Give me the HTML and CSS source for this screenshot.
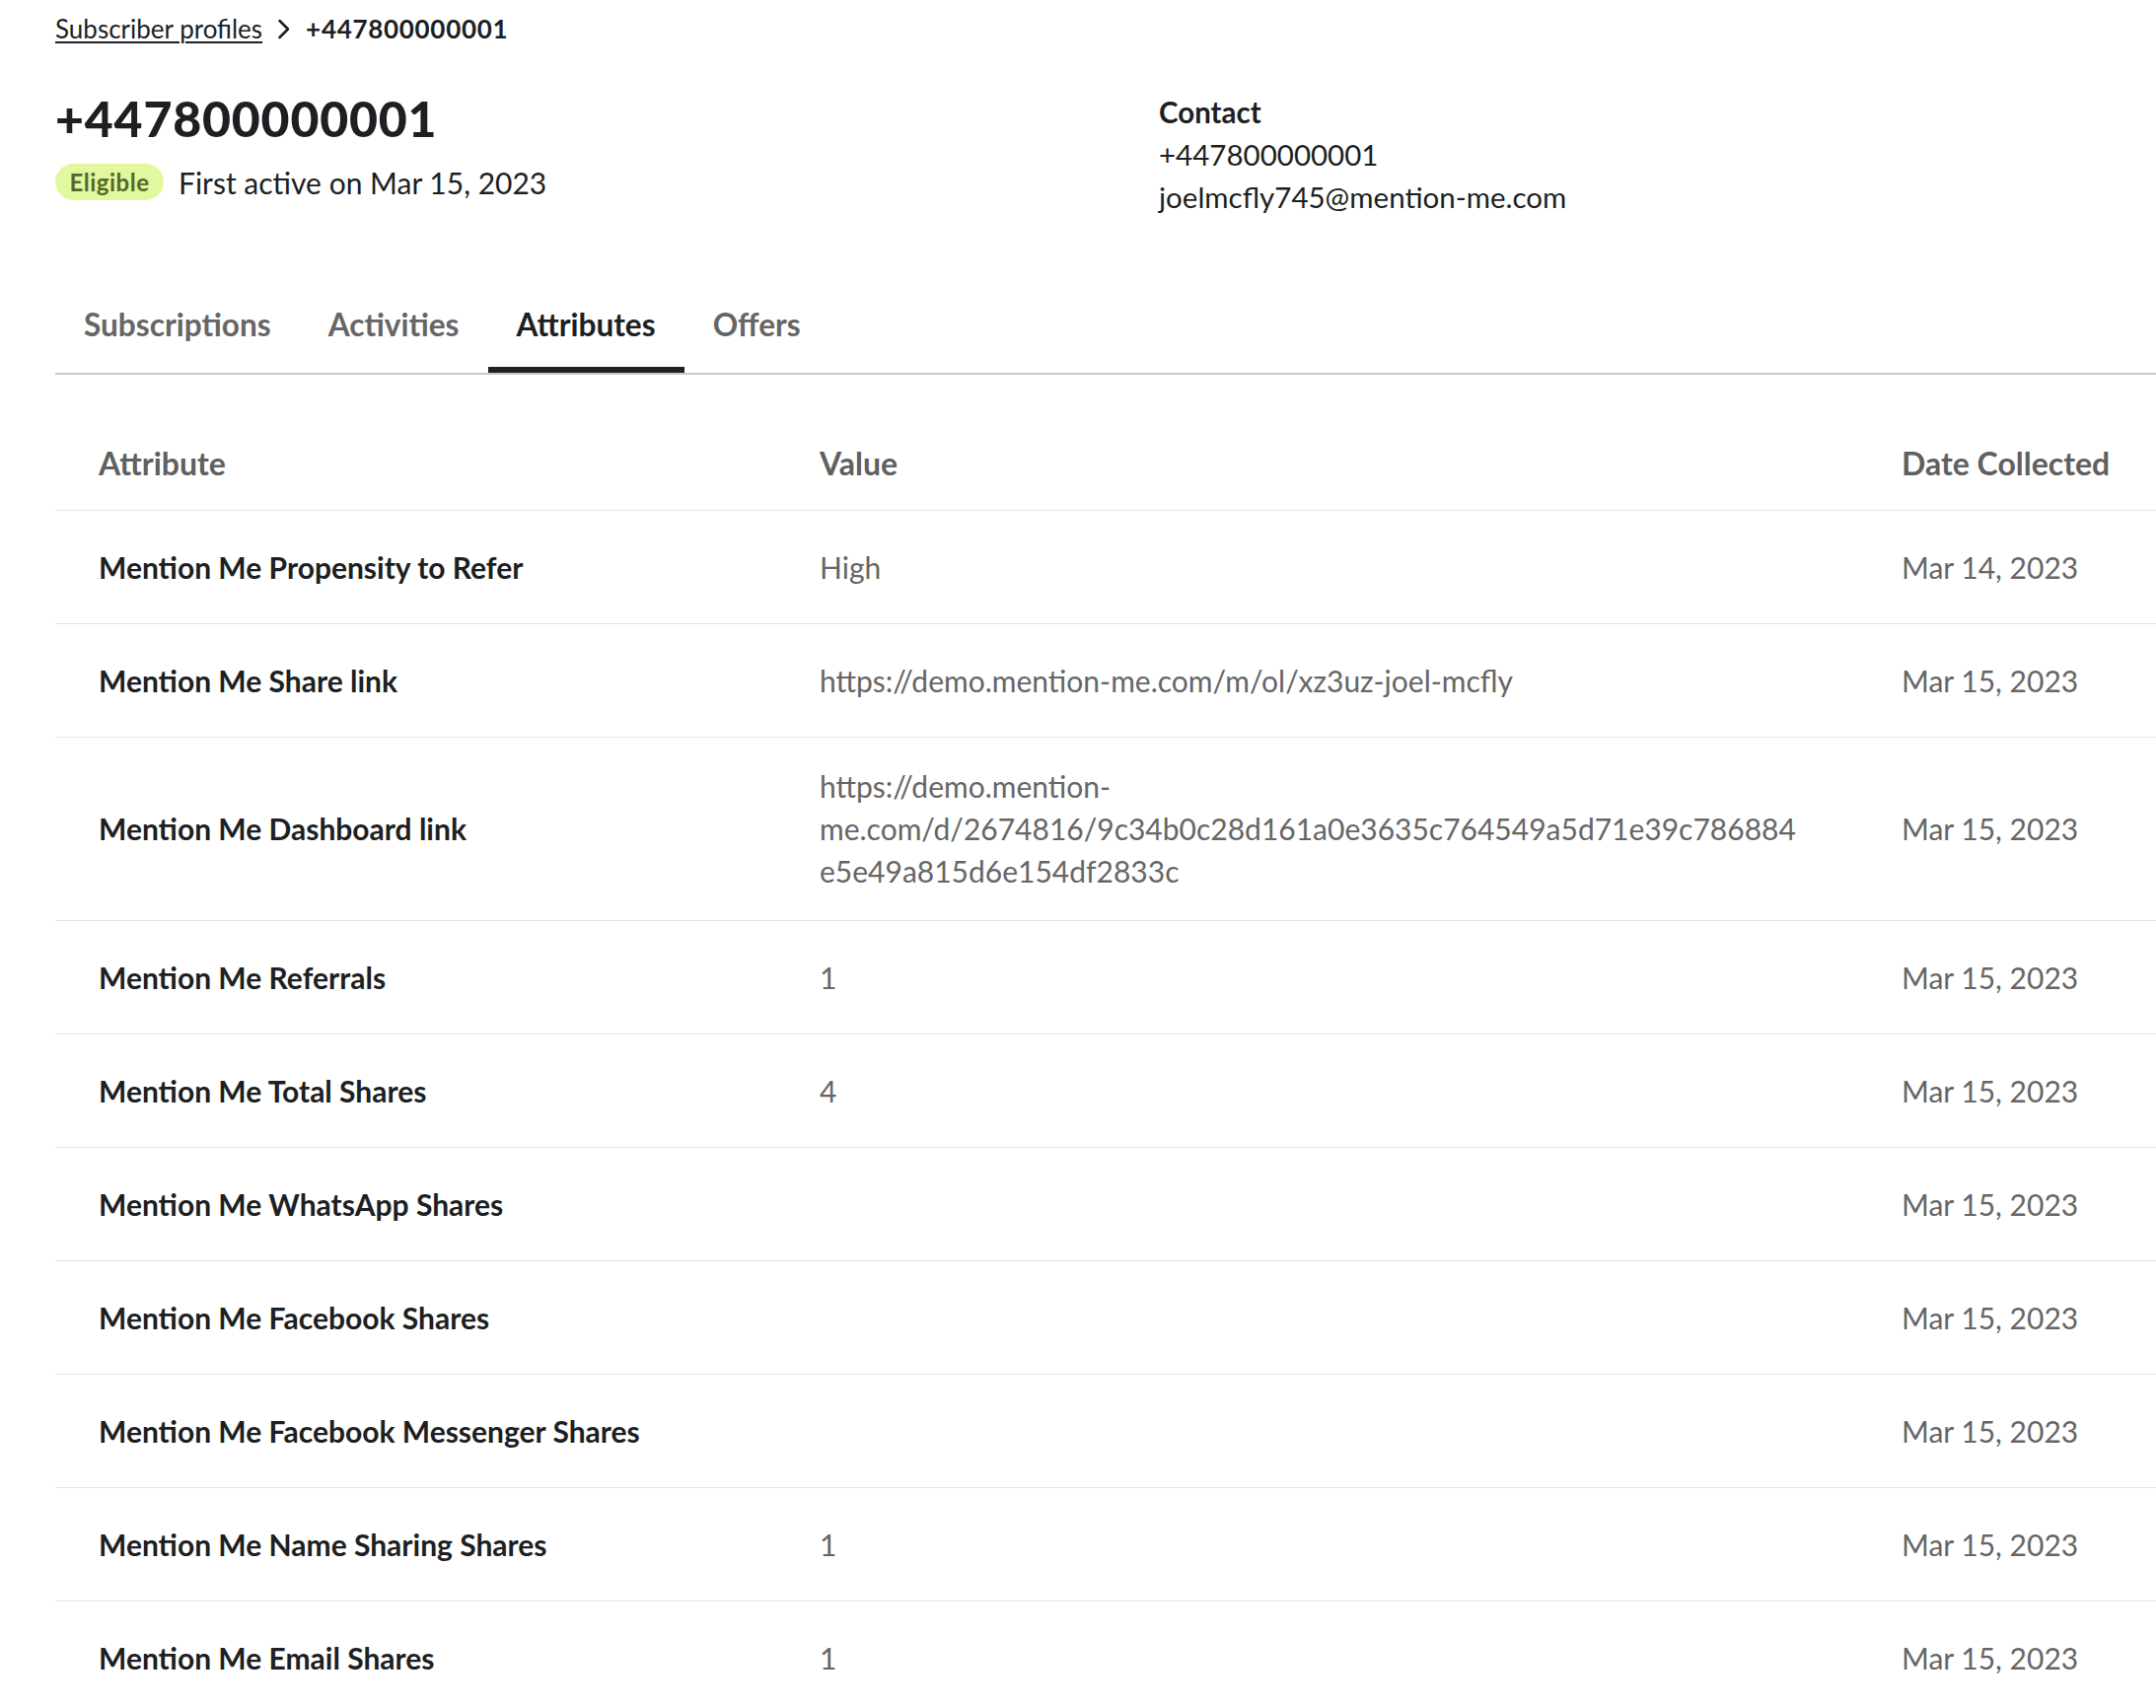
FILE: index.html
```html
<!DOCTYPE html>
<html lang="en">
<head>
<meta charset="utf-8">
<title>+447800000001 – Subscriber profile</title>
<link rel="stylesheet" href="styles.css">
</head>
<body>
<div class="page">
  <nav class="breadcrumb">
    <a class="crumb-link" href="#">Subscriber profiles</a>
    <svg class="crumb-sep" viewBox="0 0 13 21" width="13" height="21" aria-hidden="true"><path d="M2.5 2 L11 10.5 L2.5 19" fill="none" stroke="#1d1f22" stroke-width="2.5" stroke-linecap="round" stroke-linejoin="round"/></svg>
    <span class="crumb-current">+447800000001</span>
  </nav>

  <header class="profile-head">
    <div class="profile-main">
      <h1 class="profile-title">+447800000001</h1>
      <div class="profile-meta">
        <span class="badge">Eligible</span>
        <span class="meta-text">First active on Mar 15, 2023</span>
      </div>
    </div>
    <div class="contact">
      <div class="contact-label">Contact</div>
      <div class="contact-line">+447800000001</div>
      <div class="contact-line">joelmcfly745@mention-me.com</div>
    </div>
  </header>

  <div class="tabs">
    <a class="tab" href="#">Subscriptions</a>
    <a class="tab" href="#">Activities</a>
    <a class="tab tab-active" href="#">Attributes</a>
    <a class="tab" href="#">Offers</a>
  </div>

  <div class="table">
    <div class="row row-head">
      <div class="cell">Attribute</div>
      <div class="cell">Value</div>
      <div class="cell">Date Collected</div>
    </div>
    <div class="row">
      <div class="cell name">Mention Me Propensity to Refer</div>
      <div class="cell value">High</div>
      <div class="cell date">Mar 14, 2023</div>
    </div>
    <div class="row">
      <div class="cell name">Mention Me Share link</div>
      <div class="cell value">https://demo.mention-me.com/m/ol/xz3uz-joel-mcfly</div>
      <div class="cell date">Mar 15, 2023</div>
    </div>
    <div class="row">
      <div class="cell name">Mention Me Dashboard link</div>
      <div class="cell value">https://demo.mention-<br>me.com/d/2674816/9c34b0c28d161a0e3635c764549a5d71e39c786884<br>e5e49a815d6e154df2833c</div>
      <div class="cell date">Mar 15, 2023</div>
    </div>
    <div class="row">
      <div class="cell name">Mention Me Referrals</div>
      <div class="cell value">1</div>
      <div class="cell date">Mar 15, 2023</div>
    </div>
    <div class="row">
      <div class="cell name">Mention Me Total Shares</div>
      <div class="cell value">4</div>
      <div class="cell date">Mar 15, 2023</div>
    </div>
    <div class="row">
      <div class="cell name">Mention Me WhatsApp Shares</div>
      <div class="cell value"></div>
      <div class="cell date">Mar 15, 2023</div>
    </div>
    <div class="row">
      <div class="cell name">Mention Me Facebook Shares</div>
      <div class="cell value"></div>
      <div class="cell date">Mar 15, 2023</div>
    </div>
    <div class="row">
      <div class="cell name">Mention Me Facebook Messenger Shares</div>
      <div class="cell value"></div>
      <div class="cell date">Mar 15, 2023</div>
    </div>
    <div class="row">
      <div class="cell name">Mention Me Name Sharing Shares</div>
      <div class="cell value">1</div>
      <div class="cell date">Mar 15, 2023</div>
    </div>
    <div class="row">
      <div class="cell name">Mention Me Email Shares</div>
      <div class="cell value">1</div>
      <div class="cell date">Mar 15, 2023</div>
    </div>
  </div>
</div>
</body>
</html>
```

FILE: styles.css
```css
* { box-sizing: border-box; }

html, body {
  margin: 0;
  padding: 0;
  background: #ffffff;
}

body {
  font-family: Lato, "Noto Sans", "Liberation Sans", sans-serif;
  color: #1d1f22;
}

.page {
  padding: 0 0 0 56px;
  overflow: hidden;
}

/* Breadcrumb */
.breadcrumb {
  display: flex;
  align-items: center;
  height: 36px;
  margin-top: 11px;
  font-size: 26px;
}

.crumb-link {
  color: #1d1f22;
  text-decoration: underline;
  text-underline-offset: 3px;
  text-decoration-thickness: 1.5px;
}

.crumb-sep {
  margin: 0 16px 0 15px;
  width: 13px;
  height: 21px;
}

.crumb-current {
  font-weight: 700;
  letter-spacing: 0.7px;
}

/* Header */
.profile-head {
  display: grid;
  grid-template-columns: 1119px auto;
  align-items: start;
  margin-top: 45px;
}

.profile-title {
  margin: 0;
  font-size: 50px;
  line-height: 56px;
  font-weight: 900;
  letter-spacing: 0.8px;
}

.profile-meta {
  display: flex;
  align-items: center;
  margin-top: 18px;
}

.badge {
  display: inline-flex;
  align-items: center;
  height: 37px;
  padding: 0 14.5px;
  border-radius: 19px;
  background: #e2f89e;
  color: #58682a;
  font-size: 24px;
  font-weight: 700;
  letter-spacing: 0.5px;
}

.meta-text {
  margin-left: 15px;
  font-size: 30px;
}

.contact {
  font-size: 29.5px;
  line-height: 43px;
}

.contact-label {
  font-weight: 700;
}

/* Tabs */
.tabs {
  display: flex;
  margin-top: 64px;
  border-bottom: 2px solid #c9c9c9;
}

.tab {
  display: block;
  padding: 24px 29px 23px;
  line-height: 40px;
  font-size: 31.6px;
  font-weight: 700;
  color: #666666;
  text-decoration: none;
  border-bottom: 6px solid transparent;
}

.tab-active {
  color: #1d1f22;
  border-bottom-color: #1f2124;
}

/* Table */
.table {
  display: flex;
  flex-direction: column;
}

.row {
  display: grid;
  grid-template-columns: 731px 1097px 1fr;
  align-items: center;
  min-height: 115px;
  border-bottom: 1.5px solid #e4e4e4;
  font-size: 30px;
}

.row-head {
  min-height: 0;
  padding: 70px 0 27px;
  font-size: 32px;
  font-weight: 700;
  color: #606060;
}

.cell {
  padding: 28px 0 28px 44px;
  line-height: 43px;
}

.row-head .cell {
  padding-top: 0;
  padding-bottom: 0;
  line-height: 40px;
}

.name {
  font-weight: 700;
  color: #1d1f22;
}

.value, .date {
  color: #666666;
}
```
